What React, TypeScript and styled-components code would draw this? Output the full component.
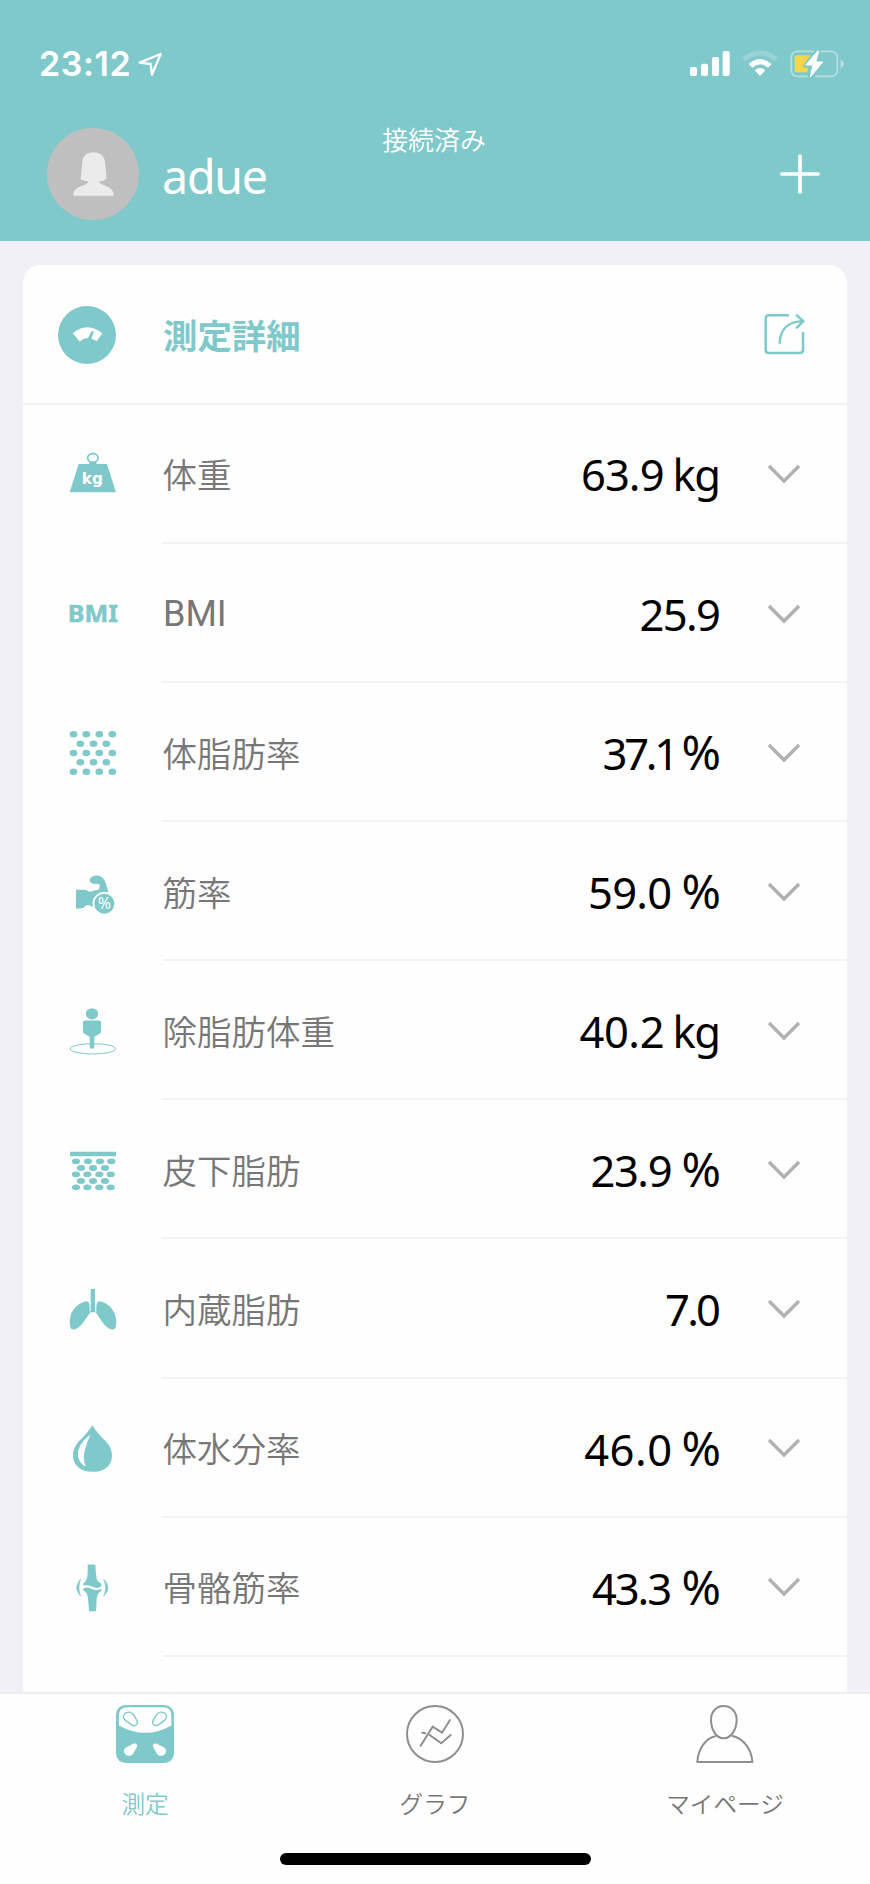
import React from "react";
import styled, { createGlobalStyle } from "styled-components";

const teal = "#80c9cb";
const cjk = '"Noto Sans CJK JP", sans-serif';

const GlobalStyle = createGlobalStyle`
  * { box-sizing: border-box; }
  body { margin: 0; background: #f1f0f6; }
  svg { display: block; flex: none; overflow: visible; }
`;

const Screen = styled.div`
  width: 870px;
  height: 1884px;
  display: flex;
  flex-direction: column;
  overflow: hidden;
  background: #f1f0f6;
  font-family: "Noto Sans", ${cjk};
`;

const Header = styled.header`
  flex: none;
  height: 241px;
  background: ${teal};
  color: #fff;
`;

const StatusBar = styled.div`
  height: 127px;
  padding: 0 26px 0 39px;
  display: flex;
  align-items: center;
`;

const Clock = styled.span`
  font: 600 34px/40px Inter, sans-serif;
  letter-spacing: 0.6px;
  margin-right: 6px;
`;

const StatusIcons = styled.div`
  margin-left: auto;
  display: flex;
  align-items: center;
  gap: 12px;
`;

const ProfileBar = styled.div`
  display: grid;
  grid-template-columns: 1fr auto 1fr;
  align-items: center;
  height: 94px;
  padding: 0 49px 0 47px;
`;

const Profile = styled.div`
  display: flex;
  align-items: center;
  gap: 23px;
`;

const Avatar = styled.div`
  width: 92px;
  height: 92px;
  border-radius: 50%;
  background: #bfbfbf;
  display: grid;
  place-items: center;
`;

const UserName = styled.span`
  padding-top: 4px;
  font-size: 46.5px;
  line-height: 60px;
  letter-spacing: -1.2px;
`;

const Connection = styled.span`
  align-self: start;
  font: 350 25.9px/24px ${cjk};
`;

const AddButton = styled.button`
  justify-self: end;
  margin-right: 1px;
  padding: 0;
  border: 0;
  background: none;
`;

const Content = styled.main`
  flex: 1;
  min-height: 0;
  overflow: hidden;
  padding: 24px 23px 0;
`;

const Card = styled.section`
  height: 1500px;
  border-radius: 18px 18px 0 0;
  background: #fefefe;
`;

const CardHeader = styled.div`
  height: 139.9px;
  padding: 2px 42px 0 35px;
  display: flex;
  align-items: center;
  border-bottom: 2px solid #f3f3f5;
`;

const CardTitle = styled.h1`
  flex: 1;
  margin: 0 0 2px 47px;
  color: ${teal};
  font: 700 34.4px/50px ${cjk};
`;

const Row = styled.div`
  height: 139.1px;
  display: flex;
`;

const IconCell = styled.div`
  width: 139px;
  padding-left: 42px;
  display: flex;
  align-items: center;
`;

const RowBody = styled.div`
  flex: 1;
  padding: 2px 47px 0 0;
  display: flex;
  align-items: center;
  border-bottom: 2px solid #f3f3f5;
`;

const Label = styled.span<{ $latin?: boolean }>`
  flex: 1;
  padding-left: ${(p) => (p.$latin ? "1px" : "0.5px")};
  padding-bottom: ${(p) => (p.$latin ? "0" : "2px")};
  color: #777;
  font: ${(p) => (p.$latin ? "400 36px" : "350 34.5px")}/50px ${(p) => (p.$latin ? "Roboto, " : "")}${cjk};
`;

const Value = styled.span`
  margin-right: 47px;
  display: flex;
  align-items: baseline;
  color: #000;
  font-size: 43.5px;
  line-height: 60px;
`;

const Amount = styled.span<{ $track: number }>`
  letter-spacing: ${(p) => p.$track}px;
  margin-right: ${(p) => -p.$track}px;
`;

const Unit = styled.span<{ $gap: number; $percent: boolean }>`
  margin-left: ${(p) => p.$gap}px;
  font-size: ${(p) => (p.$percent ? "47.5px" : "inherit")};
  letter-spacing: ${(p) => (p.$percent ? "0" : "-1.5px")};
  margin-right: ${(p) => (p.$percent ? "0" : "1.5px")};
`;

const TabBar = styled.nav`
  flex: none;
  height: 192px;
  border-top: 2px solid #ededf1;
  background: #fefefe;
  display: flex;
  flex-direction: column;
  align-items: center;
`;

const Tabs = styled.div`
  width: 100%;
  height: 159px;
  padding-top: 11px;
  display: grid;
  grid-template-columns: repeat(3, 1fr);
`;

const Tab = styled.div<{ $active?: boolean }>`
  display: flex;
  flex-direction: column;
  align-items: center;
  gap: 23px;
  color: ${(p) => (p.$active ? teal : "#777")};
  font: 350 23.6px/34px ${cjk};
`;

const HomeIndicator = styled.div`
  width: 311px;
  height: 12px;
  border-radius: 6px;
  background: #000;
`;

const RowIcon = ({ origin, children }: { origin: string; children: React.ReactNode }) => (
  <svg width="56" height="56" viewBox={`${origin} 168 168`} fill={teal}>
    {children}
  </svg>
);

const dots = (rows: [number, number[]][], rx: number, ry: number) =>
  rows.flatMap(([y, xs]) => xs.map((x) => <ellipse key={`${x}-${y}`} cx={x} cy={y} rx={rx} ry={ry} />));

const WeightIcon = () => (
  <RowIcon origin="195 588">
    <ellipse cx="278.500" cy="624" rx="15.500" ry="13.500" fill="none" stroke={teal} strokeWidth="5.500" />
    <path d="M270 635h17l4 8h-25zM236 642H321L348 727H209Z" />
    <text x="245" y="703" fill="#fff" fontFamily="DejaVu Sans" fontWeight="700" fontSize="47" textLength="64" lengthAdjust="spacingAndGlyphs">kg</text>
  </RowIcon>
);

const BmiIcon = () => (
  <RowIcon origin="75 75">
    <text x="83" y="183" fontFamily="Noto Sans" fontWeight="700" fontSize="70" textLength="151" lengthAdjust="spacingAndGlyphs" stroke={teal} strokeWidth="1.500">BMI</text>
  </RowIcon>
);

const FatIcon = () => (
  <RowIcon origin="75 493">
    {dots([521, 577, 633].map((y) => [y, [100.5, 139, 178, 217]] as [number, number[]]), 11.5, 9.8)}
    {dots([549, 605].map((y) => [y, [121, 160.5, 199]] as [number, number[]]), 11.5, 9.8)}
  </RowIcon>
);

const MuscleIcon = () => (
  <RowIcon origin="75 910">
    <path d="M108 987H132Q139 987 143 991Q152 995 161 990Q168 986 175 989Q180 981 179 971Q170 968 162 970Q149 969 149 958Q151 947 165 945Q180 943 188 951Q200 966 205 996A35 35 0 0 0 159 1038Q153 1036 144 1033Q136 1033 130 1042Q122 1044 108 1044Z" />
    <circle cx="193" cy="1029" r="30" />
    <text x="193.500" y="1046" textAnchor="middle" fill="#fff" fontFamily="Noto Sans" fontSize="48" textLength="39" lengthAdjust="spacingAndGlyphs">%</text>
  </RowIcon>
);

const LeanMassIcon = () => (
  <RowIcon origin="75 67.5">
    <ellipse cx="158.500" cy="205" rx="68" ry="15.500" fill="none" stroke={teal} strokeWidth="3" />
    <ellipse cx="156" cy="100" rx="18.500" ry="17" />
    <path d="M134 120H178Q183 120 183 125V154Q183 157 180 159L163 169V199Q163 205 156 205Q149 205 149 199V169L132 159Q129 157 129 154V125Q129 120 134 120Z" />
  </RowIcon>
);

const SubcutaneousIcon = () => (
  <RowIcon origin="75 485">
    <path d="M90 514H228V528H90Z" />
    {dots([[543, [108, 144, 180, 214]], [563, [123, 159, 195]], [582, [108, 142, 178, 212]], [602, [123, 159, 195]], [621, [108, 142, 178, 212]]], 12.3, 8.8)}
  </RowIcon>
);

const VisceralIcon = () => (
  <RowIcon origin="75 902">
    <path d="M152 926H165V992L173 999H145L152 992Z" />
    <path d="M137 963C147 960 150 971 149 997Q144 1008 135 1019C126 1033 113 1049 98 1047C88 1045 88 1025 91 1009C96 986 117 967 137 963Z" />
    <path d="M181 963C171 960 168 971 169 997Q174 1008 183 1019C192 1033 205 1049 220 1047C230 1045 230 1025 227 1009C222 986 201 967 181 963Z" />
    <path d="M149 996H169L160 1010H158Z" fill="#fefefe" />
  </RowIcon>
);

const WaterIcon = () => (
  <RowIcon origin="75 149.5">
    <path d="M157 165Q171 188 197 213Q217 233 216 258C215 289 190 305 157 305S99 288 99 257Q98 233 118 212Q143 188 157 165Z" />
    <path d="M151 193Q110 225 114 257Q117 281 138 289Q127 271 134 242Q139 221 151 193Z" fill="#fefefe" />
  </RowIcon>
);

const BoneIcon = () => (
  <RowIcon origin="75 566.6">
    <path d="M143 583H166Q167 607 170 626Q172 635 184 640V649Q171 657 157 650Q143 643 130 646V640Q140 633 142 620Q144 603 143 583Z" />
    <path d="M130 654Q143 649 154 656Q169 663 184 656V662Q172 669 170 687L168 723H147Q146 698 143 679Q141 666 130 661Z" />
    <path d="M122 627Q98 652 122 678Q112 653 122 627ZM191 627Q217 652 191 678Q202 653 191 627Z" stroke={teal} strokeWidth="1.500" />
  </RowIcon>
);

const Chevron = () => (
  <svg width="32" height="20" viewBox="0 0 32 20" fill="none" stroke="#b2b2b2" strokeWidth="3.400">
    <path d="M1 2L16 17L31 2" />
  </svg>
);

type Metric = {
  label: string;
  amount: string;
  unit?: string;
  icon: React.FC;
  track: number;
  gap?: number;
  latin?: boolean;
};

const metrics: Metric[] = [
  { label: "体重", amount: "63.9", unit: "kg", icon: WeightIcon, track: -0.9, gap: 8 },
  { label: "BMI", amount: "25.9", icon: BmiIcon, track: -1.6, latin: true },
  { label: "体脂肪率", amount: "37.1", unit: "%", icon: FatIcon, track: -3.3, gap: 2.5 },
  { label: "筋率", amount: "59.0", unit: "%", icon: MuscleIcon, track: -0.8, gap: 9.5 },
  { label: "除脂肪体重", amount: "40.2", unit: "kg", icon: LeanMassIcon, track: -0.4, gap: 8 },
  { label: "皮下脂肪", amount: "23.9", unit: "%", icon: SubcutaneousIcon, track: -1.4, gap: 9 },
  { label: "内蔵脂肪", amount: "7.0", icon: VisceralIcon, track: -2.7 },
  { label: "体水分率", amount: "46.0", unit: "%", icon: WaterIcon, track: 0.5, gap: 9.5 },
  { label: "骨骼筋率", amount: "43.3", unit: "%", icon: BoneIcon, track: -2.1, gap: 9.5 },
];

export default function App() {
  return (
    <Screen>
      <GlobalStyle />
      <Header>
        <StatusBar>
          <Clock>23:12</Clock>
          <svg width="26" height="26" viewBox="412 150 78 78" fill="none" stroke="#fff" strokeWidth="7" strokeLinejoin="round">
            <path d="M483 159L420 185L453 189L457 221Z" />
          </svg>
          <StatusIcons>
            <svg width="40" height="27" viewBox="766 150 120 81" fill="#fff">
              <rect x="766" y="201" width="21" height="27" rx="6" />
              <rect x="799" y="191" width="21" height="37" rx="6" />
              <rect x="832" y="171" width="21" height="57" rx="6" />
              <rect x="864" y="153" width="21" height="75" rx="6" />
            </svg>
            <svg width="36" height="27" viewBox="921 150 108 81" fill="#fff">
              <path d="M921 173Q975 130 1029 173L1018 184Q975 148 932 184Z" opacity=".2" />
              <path d="M941 192Q975 162 1010 192L999 203Q975 182 952 203Z" />
              <path d="M959 211Q975 197 991 211L975 228Z" />
            </svg>
            <svg width="54" height="28" viewBox="1065 149 162 84">
              <g fill="none" stroke="#fff" strokeOpacity=".42" strokeWidth="5">
                <path d="M1137 153H1089Q1069 153 1069 173V208Q1069 228 1089 228H1118M1158 153H1187Q1207 153 1207 173V208Q1207 228 1187 228H1140" />
              </g>
              <path d="M1217 178Q1226 183 1226 191Q1226 199 1217 204Z" fill="#fff" opacity=".5" />
              <path d="M1087 165H1127L1107 190Q1102 200 1112 203H1120L1117 216H1087Q1079 216 1079 208V173Q1079 165 1087 165Z" fill="#f4d64a" />
              <path d="M1149 151L1112 194H1134L1126 230L1163 185H1142L1151 153Z" fill="#fff" stroke="#fff" strokeWidth="3" strokeLinejoin="round" />
            </svg>
          </StatusIcons>
        </StatusBar>
        <ProfileBar>
          <Profile>
            <Avatar>
              <svg width="41" height="44" viewBox="218 457 123 132" fill="#ebebeb">
                <path d="M279 458C300 458 312 470 314 486L319 537Q309 545 297 545V548Q302 555 317 560Q340 568 341 588H218Q219 568 242 560Q259 555 263 548V545Q251 545 241 539L246 486C248 470 259 458 279 458Z" />
              </svg>
            </Avatar>
            <UserName>adue</UserName>
          </Profile>
          <Connection>接続済み</Connection>
          <AddButton aria-label="add">
            <svg width="40" height="40" viewBox="0 0 40 40" stroke="#fff" strokeWidth="3.700" strokeLinecap="round">
              <path d="M2 20H38M20 2V38" />
            </svg>
          </AddButton>
        </ProfileBar>
      </Header>
      <Content>
        <Card>
          <CardHeader>
            <svg width="58" height="58" viewBox="174 168 174 174">
              <circle cx="261" cy="255" r="87" fill={teal} />
              <path d="M218 250Q262 213 307 250L290 274Q284 268 274 266L282 245L275 243L264 264Q249 264 240 275Z" fill="#fefefe" />
            </svg>
            <CardTitle>測定詳細</CardTitle>
            <svg width="41" height="41" viewBox="986 194 123 123" fill="none" stroke={teal} strokeWidth="7.500">
              <path d="M1061 198H1001Q991 198 991 208V301Q991 311 1001 311H1093Q1103 311 1103 301V248" />
              <path d="M1033 283C1034 239 1060 216 1103 216M1082 196L1104 216L1082 237" />
            </svg>
          </CardHeader>
          {metrics.map(({ label, amount, unit, icon: Icon, track, gap = 0, latin }) => (
            <Row key={label}>
              <IconCell><Icon /></IconCell>
              <RowBody>
                <Label $latin={latin}>{label}</Label>
                <Value>
                  <Amount $track={track}>{amount}</Amount>
                  {unit && <Unit $gap={gap} $percent={unit === "%"}>{unit}</Unit>}
                </Value>
                <Chevron />
              </RowBody>
            </Row>
          ))}
        </Card>
      </Content>
      <TabBar>
        <Tabs>
          <Tab $active>
            <svg width="58" height="58" viewBox="108 75 173 173">
              <rect x="108" y="75" width="173" height="173" rx="29" fill={teal} />
              <path d="M117 106Q117 82 142 82H248Q273 82 273 106V136Q195 180 117 136Z" fill="#fefefe" />
              <g fill="none" stroke={teal} strokeWidth="4">
                <path d="M133 102C139 95 151 94 158 101L170 120C176 132 165 140 156 135L139 123C130 117 128 109 133 102Z" />
                <path d="M256 102C250 95 238 94 231 101L219 120C213 132 224 140 233 135L250 123C259 117 261 109 256 102Z" />
              </g>
              <path d="M139 201L158 191C166 187 174 193 170 201L160 219C154 230 139 228 134 220C130 213 131 206 139 201ZM250 201L231 191C223 187 215 193 219 201L229 219C235 230 250 228 255 220C259 213 258 206 250 201Z" fill="#fefefe" />
            </svg>
            測定
          </Tab>
          <Tab>
            <svg width="58" height="58" viewBox="978 75 174 174" fill="none" stroke="#8f8f8f" strokeWidth="6">
              <circle cx="1065" cy="162" r="84" />
              <path d="M1022 197L1058 140L1086 158L1110 120M1027 158L1036 160M1049 165L1084 190L1112 165" strokeLinecap="round" />
            </svg>
            グラフ
          </Tab>
          <Tab>
            <svg width="58" height="58" viewBox="680 75 174 174" fill="none" stroke="#8f8f8f" strokeWidth="6">
              <path d="M763 78C786 78 802 96 802 119C802 146 787 175 763 175S725 146 725 119C725 96 740 78 763 78Z" />
              <path d="M740 168C709 174 686 207 684 246H849C847 207 822 174 787 167" />
            </svg>
            マイページ
          </Tab>
        </Tabs>
        <HomeIndicator />
      </TabBar>
    </Screen>
  );
}
